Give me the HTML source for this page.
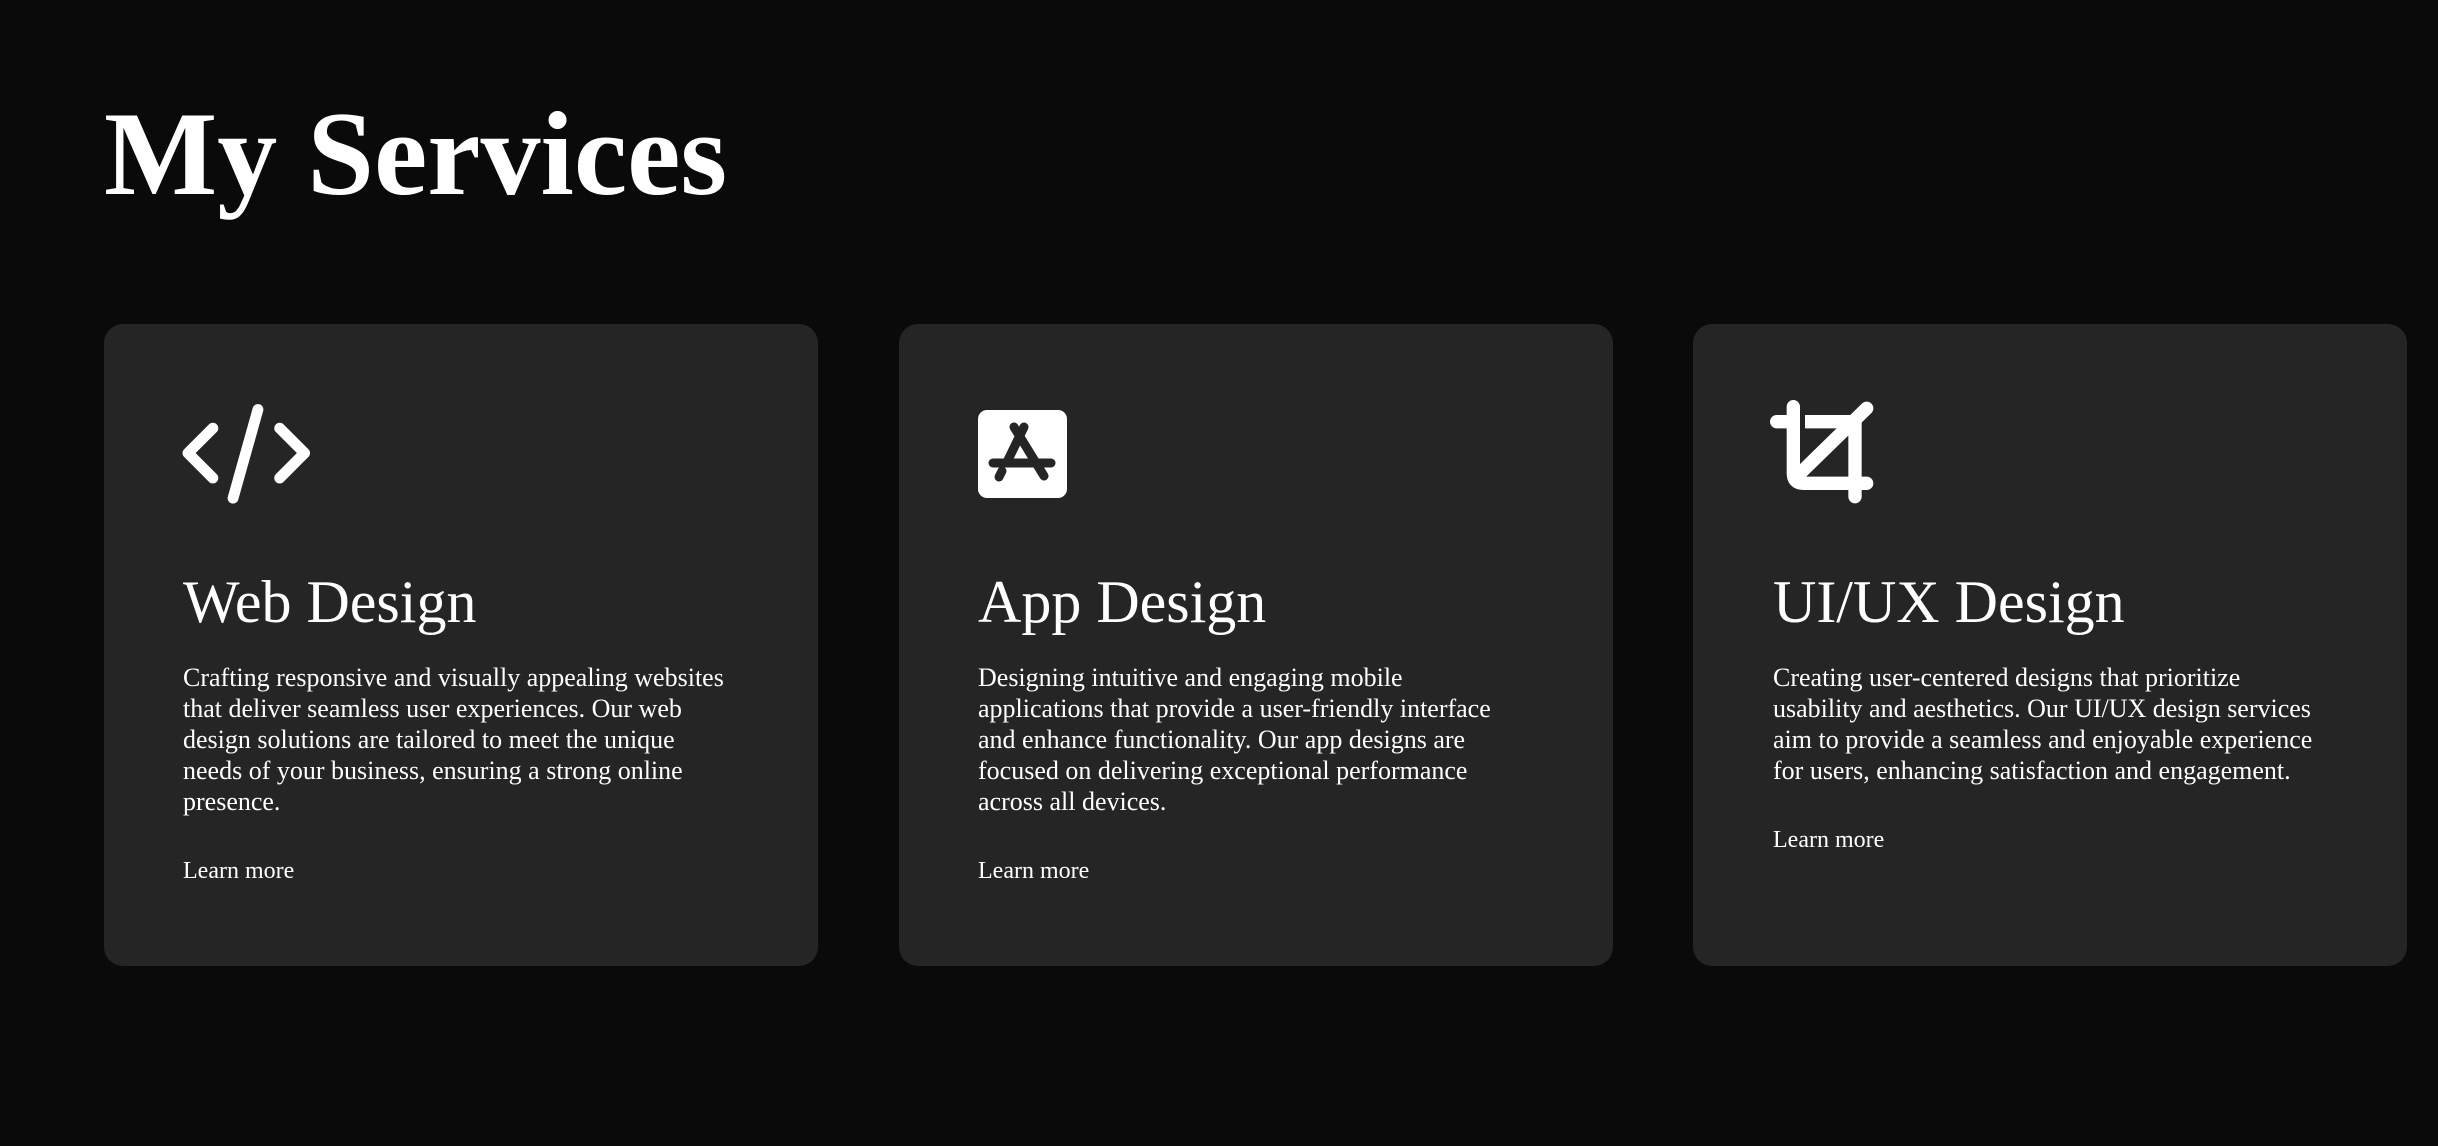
<!DOCTYPE html>
<html><head><meta charset="utf-8"><style>
html,body{margin:0;padding:0;background:#0a0a0a;width:2438px;height:1146px;overflow:hidden;color:#fff;font-family:"Liberation Serif",serif}
h1{position:absolute;left:104px;margin:0;font-size:120px;font-weight:bold;line-height:1;}
.card{position:absolute;top:324px;width:714px;height:642px;background:#252525;border-radius:19px}
.h{position:absolute;top:562px;font-size:60px;line-height:80px}
.p{position:absolute;top:662px;width:600px;font-size:26px;line-height:31px}
.lm{position:absolute;font-size:24px;line-height:31px}
svg{position:absolute}
</style></head><body>
<h1 style="top:94px">My Services</h1>

<div class="card" style="left:104px">
<svg style="left:0;top:0" width="714" height="300" viewBox="0 0 459.2 192.9"><g fill="none" stroke="#fff" stroke-width="7" stroke-linecap="round" stroke-linejoin="round"><path d="M70 67 L54 83 L70 99"/><path d="M99 55 L83 112"/><path d="M113 67 L129 83 L113 99"/></g></svg>
</div>
<div class="card" style="left:899px"></div>
<div class="card" style="left:1693px"></div>

<svg style="left:978px;top:410px" width="89" height="88" viewBox="0 0 89 88"><rect x="0" y="0" width="89" height="88" rx="9" fill="#fff"/><g stroke="#252525" stroke-width="9" stroke-linecap="round" fill="none"><path d="M46 17 L30 50"/><path d="M21 67 L24 61"/><path d="M36 17 L66 66"/><path d="M15 53 H73"/></g></svg>

<svg style="left:1760px;top:390px" width="150" height="130" viewBox="0 0 450 390"><g fill="none" stroke="#fff" stroke-width="40" stroke-linecap="round" stroke-linejoin="round"><path d="M100 50 V250 Q100 280 130 280 H320"/><path d="M50 95 H100"/><path d="M285 95 V320"/><path d="M320 55 L115 255"/></g><path d="M135 75 H285 V115 H135Z" fill="#fff"/></svg>

<div class="h" style="left:183px">Web Design</div>
<div class="h" style="left:978px">App Design</div>
<div class="h" style="left:1773px">UI/UX Design</div>

<div class="p" style="left:183px">Crafting responsive and visually appealing websites<br>that deliver seamless user experiences. Our web<br>design solutions are tailored to meet the unique<br>needs of your business, ensuring a strong online<br>presence.</div>
<div class="p" style="left:978px">Designing intuitive and engaging mobile<br>applications that provide a user-friendly interface<br>and enhance functionality. Our app designs are<br>focused on delivering exceptional performance<br>across all devices.</div>
<div class="p" style="left:1773px">Creating user-centered designs that prioritize<br>usability and aesthetics. Our UI/UX design services<br>aim to provide a seamless and enjoyable experience<br>for users, enhancing satisfaction and engagement.</div>

<div class="lm" style="left:183px;top:856px">Learn more</div>
<div class="lm" style="left:978px;top:856px">Learn more</div>
<div class="lm" style="left:1773px;top:825px">Learn more</div>
</body></html>
